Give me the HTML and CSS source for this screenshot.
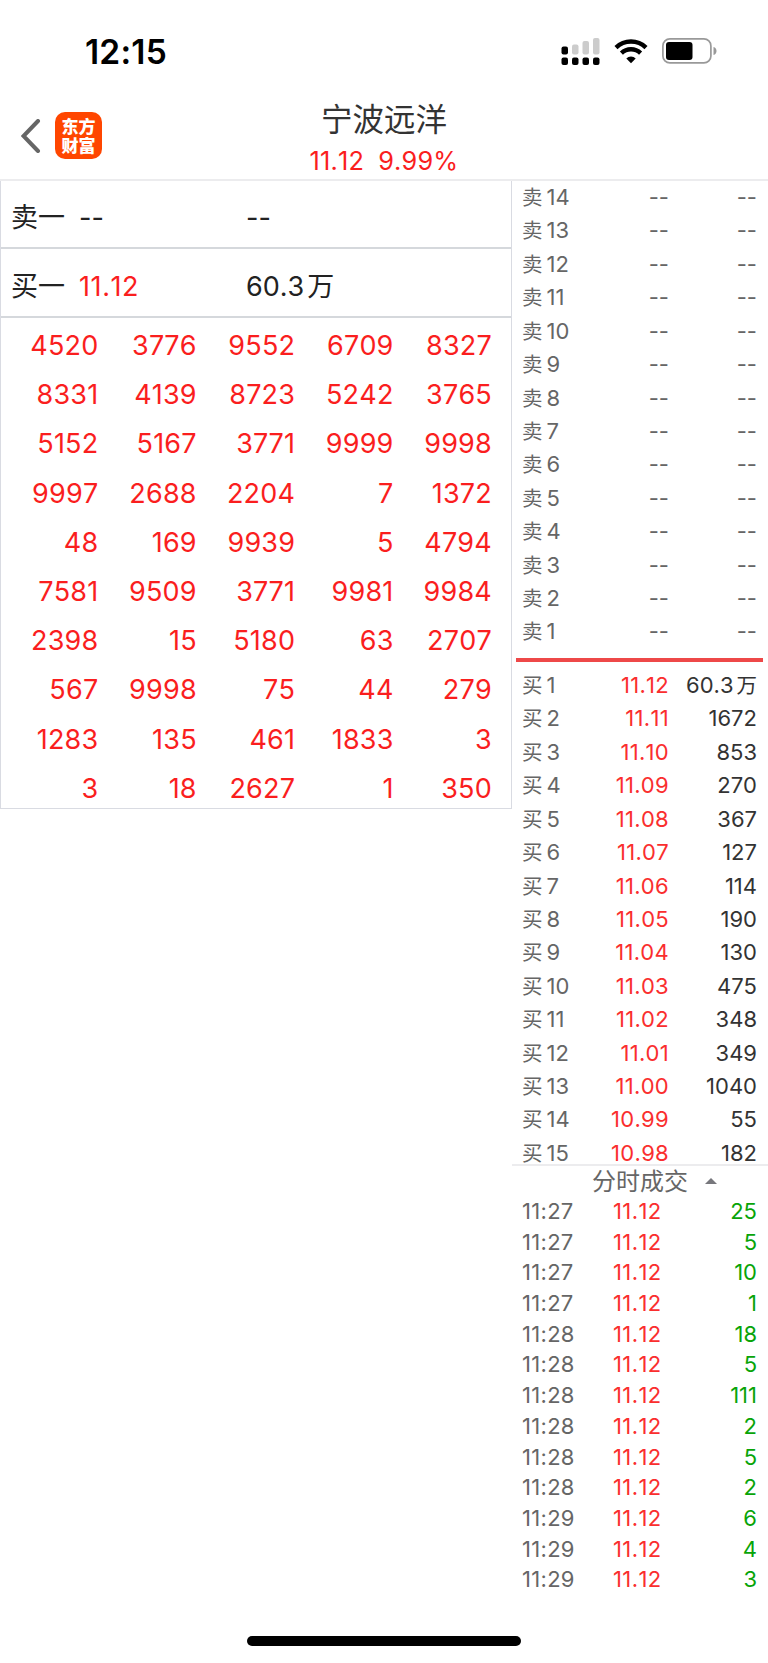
FILE: index.html
```html
<!DOCTYPE html>
<html lang="zh-CN">
  <head>
    <meta charset="UTF-8">
    <title>宁波远洋</title>
    <link rel="stylesheet" href="styles.css">
  </head>
  <body>
    <!-- Status bar -->
    <div class="status-bar">
      <div class="clock">12:15</div>
      <div class="status-icons">
        <svg width="39" height="28" viewBox="0 0 39 28">
          <rect x="0.5" y="9.5" width="6.5" height="8" rx="2" />
          <g fill="#cccccc">
            <rect x="11" y="7.5" width="6.5" height="10" rx="2" />
            <rect x="21.5" y="4" width="6.5" height="13.5" rx="2" />
            <rect x="32" y="1" width="6.5" height="16.5" rx="2" />
          </g>
          <rect x="0.5" y="20.5" width="6.5" height="7.5" rx="2" />
          <rect x="11" y="20.5" width="6.5" height="7.5" rx="2" />
          <rect x="21.5" y="20.5" width="6.5" height="7.5" rx="2" />
          <rect x="32" y="20.5" width="6.5" height="7.5" rx="2" />
        </svg>
        <svg width="34" height="26" viewBox="0 0 34 26">
          <g fill="none" stroke="#000" stroke-width="4.4">
            <path d="M2 9.6a21.6 21.6 0 0 1 30 0" />
            <path d="M7.4 15.2a13.8 13.8 0 0 1 19.2 0" />
          </g>
          <path d="M17 25.2l-4.7-4.8a6.6 6.6 0 0 1 9.4 0z" />
        </svg>
        <svg width="55" height="26" viewBox="0 0 55 26">
          <rect x="0.9" y="0.9" width="48" height="24" rx="7" fill="none" stroke="#999" stroke-width="1.7" />
          <rect x="4" y="4" width="26.5" height="18" rx="3" />
          <path d="M51.5 9c2 .5 3 2.200 3 4s-1 3.500-3 4z" fill="#999" />
        </svg>
      </div>
    </div>

    <!-- Stock title -->
    <div class="header">
      <div class="header-left">
        <svg width="20" height="34" viewBox="0 0 20 34">
          <path d="M17 2L2.500 17L17 32" fill="none" stroke="#666" stroke-width="4" stroke-linecap="round" />
        </svg>
        <div class="logo">东方<br>财富</div>
      </div>
      <div class="title">
        <div class="stock-name">宁波远洋</div>
        <div class="stock-price"><span>11.12</span><span>9.99%</span></div>
      </div>
    </div>

    <div class="content">
      <!-- Order queue -->
      <div class="queue">
        <div class="best"><span>卖一</span><span>--</span><span>--</span></div>
        <div class="best"><span>买一</span><span class="red">11.12</span><span>60.3<i>万</i></span></div>
        <div class="queue-grid">
          <span>4520</span><span>3776</span><span>9552</span><span>6709</span><span>8327</span>
          <span>8331</span><span>4139</span><span>8723</span><span>5242</span><span>3765</span>
          <span>5152</span><span>5167</span><span>3771</span><span>9999</span><span>9998</span>
          <span>9997</span><span>2688</span><span>2204</span><span>7</span><span>1372</span>
          <span>48</span><span>169</span><span>9939</span><span>5</span><span>4794</span>
          <span>7581</span><span>9509</span><span>3771</span><span>9981</span><span>9984</span>
          <span>2398</span><span>15</span><span>5180</span><span>63</span><span>2707</span>
          <span>567</span><span>9998</span><span>75</span><span>44</span><span>279</span>
          <span>1283</span><span>135</span><span>461</span><span>1833</span><span>3</span>
          <span>3</span><span>18</span><span>2627</span><span>1</span><span>350</span>
        </div>
      </div>

      <div class="side">
        <!-- Sell levels -->
        <div class="levels sell">
          <div class="level"><span><i>卖</i>14</span><span>--</span><span>--</span></div>
          <div class="level"><span><i>卖</i>13</span><span>--</span><span>--</span></div>
          <div class="level"><span><i>卖</i>12</span><span>--</span><span>--</span></div>
          <div class="level"><span><i>卖</i>11</span><span>--</span><span>--</span></div>
          <div class="level"><span><i>卖</i>10</span><span>--</span><span>--</span></div>
          <div class="level"><span><i>卖</i>9</span><span>--</span><span>--</span></div>
          <div class="level"><span><i>卖</i>8</span><span>--</span><span>--</span></div>
          <div class="level"><span><i>卖</i>7</span><span>--</span><span>--</span></div>
          <div class="level"><span><i>卖</i>6</span><span>--</span><span>--</span></div>
          <div class="level"><span><i>卖</i>5</span><span>--</span><span>--</span></div>
          <div class="level"><span><i>卖</i>4</span><span>--</span><span>--</span></div>
          <div class="level"><span><i>卖</i>3</span><span>--</span><span>--</span></div>
          <div class="level"><span><i>卖</i>2</span><span>--</span><span>--</span></div>
          <div class="level"><span><i>卖</i>1</span><span>--</span><span>--</span></div>
        </div>

        <div class="divider"></div>

        <!-- Buy levels -->
        <div class="levels buy">
          <div class="level"><span><i>买</i>1</span><span>11.12</span><span>60.3<i>万</i></span></div>
          <div class="level"><span><i>买</i>2</span><span>11.11</span><span>1672</span></div>
          <div class="level"><span><i>买</i>3</span><span>11.10</span><span>853</span></div>
          <div class="level"><span><i>买</i>4</span><span>11.09</span><span>270</span></div>
          <div class="level"><span><i>买</i>5</span><span>11.08</span><span>367</span></div>
          <div class="level"><span><i>买</i>6</span><span>11.07</span><span>127</span></div>
          <div class="level"><span><i>买</i>7</span><span>11.06</span><span>114</span></div>
          <div class="level"><span><i>买</i>8</span><span>11.05</span><span>190</span></div>
          <div class="level"><span><i>买</i>9</span><span>11.04</span><span>130</span></div>
          <div class="level"><span><i>买</i>10</span><span>11.03</span><span>475</span></div>
          <div class="level"><span><i>买</i>11</span><span>11.02</span><span>348</span></div>
          <div class="level"><span><i>买</i>12</span><span>11.01</span><span>349</span></div>
          <div class="level"><span><i>买</i>13</span><span>11.00</span><span>1040</span></div>
          <div class="level"><span><i>买</i>14</span><span>10.99</span><span>55</span></div>
          <div class="level"><span><i>买</i>15</span><span>10.98</span><span>182</span></div>
        </div>

        <!-- Trades -->
        <div class="trades-title">分时成交<span class="arrow-up"></span></div>
        <div class="trades">
          <div class="trade"><span>11:27</span><span>11.12</span><span>25</span></div>
          <div class="trade"><span>11:27</span><span>11.12</span><span>5</span></div>
          <div class="trade"><span>11:27</span><span>11.12</span><span>10</span></div>
          <div class="trade"><span>11:27</span><span>11.12</span><span>1</span></div>
          <div class="trade"><span>11:28</span><span>11.12</span><span>18</span></div>
          <div class="trade"><span>11:28</span><span>11.12</span><span>5</span></div>
          <div class="trade"><span>11:28</span><span>11.12</span><span>111</span></div>
          <div class="trade"><span>11:28</span><span>11.12</span><span>2</span></div>
          <div class="trade"><span>11:28</span><span>11.12</span><span>5</span></div>
          <div class="trade"><span>11:28</span><span>11.12</span><span>2</span></div>
          <div class="trade"><span>11:29</span><span>11.12</span><span>6</span></div>
          <div class="trade"><span>11:29</span><span>11.12</span><span>4</span></div>
          <div class="trade"><span>11:29</span><span>11.12</span><span>3</span></div>
        </div>
      </div>
    </div>

    <div class="home-bar"></div>
  </body>
</html>
```

FILE: styles.css
```css
* {
  box-sizing: border-box;
}

body {
  margin: 0;
  width: 768px;
  height: 1663px;
  overflow: hidden;
  background: #fff;
  color: #222;
  font-family: Inter, "Noto Sans CJK SC", sans-serif;
  font-kerning: none;
}

i {
  font-style: normal;
}

.red {
  color: #fa1e1e;
  letter-spacing: 0.6px;
}

/* Status bar */
.status-bar {
  display: flex;
  justify-content: space-between;
  height: 103px;
  padding: 0 51px 0 85px;
}

.clock {
  line-height: 104px;
  font-size: 33.5px;
  font-weight: 600;
  letter-spacing: 0.2px;
  color: #000;
}

.status-icons {
  display: flex;
  align-items: center;
  gap: 14px;
  height: 102px;
}

/* Header */
.header {
  display: grid;
  grid-template-columns: 200px 368px 200px;
  height: 78px;
  border-bottom: 2px solid #ececee;
}

.header-left {
  display: flex;
  align-items: center;
  gap: 14px;
  height: 65px;
  padding-left: 21px;
}

.logo {
  width: 47px;
  height: 47px;
  padding-top: 4px;
  border-radius: 10px;
  background: #ff4600;
  color: #fff;
  font-family: "Noto Sans CJK SC", sans-serif;
  font-size: 17px;
  font-weight: 900;
  line-height: 19px;
  text-align: center;
}

.title {
  text-align: center;
}

.stock-name {
  height: 37px;
  line-height: 34px;
  font-size: 31.5px;
  color: #333;
}

.stock-price {
  display: flex;
  justify-content: center;
  gap: 14px;
  line-height: 41px;
  font-size: 25.3px;
  letter-spacing: 0.2px;
  color: #fa1e1e;
}

.content {
  display: flex;
}

/* Order queue */
.queue {
  width: 512px;
  height: 628px;
  border: 1px solid #d9dbe2;
  border-top: 0;
}

.best {
  display: grid;
  grid-template-columns: 68px 167px 1fr;
  height: 69px;
  padding-left: 10px;
  border-bottom: 2px solid #d5d8dc;
  line-height: 75px;
  font-size: 27px;
}

.best:first-child {
  height: 68px;
  line-height: 74px;
}

.best i {
  margin-left: 3px;
}

.queue-grid {
  display: grid;
  grid-template-columns: 97.4px repeat(4, 98.4px);
  grid-auto-rows: 49.2px;
  padding-top: 3px;
  line-height: 50px;
  font-size: 27px;
  letter-spacing: 0.2px;
  text-align: right;
  color: #fa1e1e;
}

/* Price levels */
.side {
  width: 256px;
}

.level {
  display: grid;
  grid-template-columns: 61px 86px 88px;
  height: 33.43px;
  padding-left: 10px;
  line-height: 33px;
  font-size: 22px;
  color: #666;
}

.level span + span,
.trade span:last-child {
  text-align: right;
}

.level i {
  font-size: 20.5px;
}

.level span:first-child i {
  margin-right: 4px;
}

.level span:last-child i {
  margin-left: 3px;
}

.sell {
  height: 477px;
}

.divider {
  height: 4px;
  margin: 0 5px 0 4px;
  background: #ee4848;
}

.buy {
  height: 502px;
  padding-top: 7px;
}

.buy span:nth-child(2) {
  letter-spacing: 0.3px;
  color: #fa2e2e;
}

.buy span:nth-child(3) {
  color: #333;
}

/* Trades */
.trades-title {
  display: flex;
  align-items: center;
  height: 32px;
  padding: 0 0 3px 80px;
  border-top: 2px solid #ececee;
  font-size: 24px;
  color: #666;
}

.arrow-up {
  margin: 3px 0 0 17px;
  border: 6px solid transparent;
  border-top: 0;
  border-bottom-color: #77777c;
}

.trade {
  display: grid;
  grid-template-columns: 91px 60px 84px;
  height: 30.7px;
  padding-left: 10px;
  line-height: 31px;
  font-size: 22px;
  color: #666;
}

.trade span:nth-child(1) {
  letter-spacing: 0.3px;
}

.trade span:nth-child(2) {
  letter-spacing: 0.4px;
  color: #fa2e2e;
}

.trade span:nth-child(3) {
  color: #08a408;
}

.home-bar {
  width: 274px;
  height: 10px;
  margin: 41px auto 0;
  border-radius: 5px;
  background: #000;
}
```
